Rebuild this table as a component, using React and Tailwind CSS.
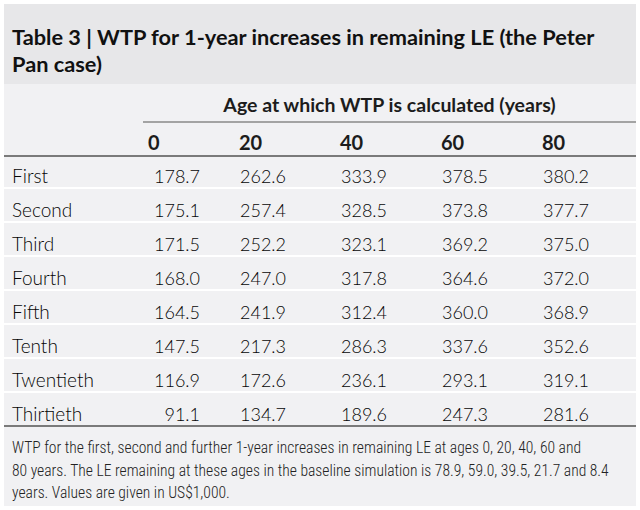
const cols = ["0", "20", "40", "60", "80"];

const rows = [
  ["First", "178.7", "262.6", "333.9", "378.5", "380.2"],
  ["Second", "175.1", "257.4", "328.5", "373.8", "377.7"],
  ["Third", "171.5", "252.2", "323.1", "369.2", "375.0"],
  ["Fourth", "168.0", "247.0", "317.8", "364.6", "372.0"],
  ["Fifth", "164.5", "241.9", "312.4", "360.0", "368.9"],
  ["Tenth", "147.5", "217.3", "286.3", "337.6", "352.6"],
  ["Twentieth", "116.9", "172.6", "236.1", "293.1", "319.1"],
  ["Thirtieth", "91.1", "134.7", "189.6", "247.3", "281.6"],
];

const grid = "grid grid-cols-[144px_91px_101px_101px_101px_1fr]";

export default function App() {
  return (
    <div className="w-[640px] h-[510px] bg-white p-1 text-[#1c1c1c] font-['Lato',sans-serif]">
      <div className="h-full flex flex-col bg-[#f1f1f3]">
        {/* title */}
        <div className="bg-[#e7e7e9] h-[80px] pt-[20px] px-2 text-[21.75px] leading-[27px] font-bold text-[#111] whitespace-nowrap">
          <div>Table 3 | WTP for 1-year increases in remaining LE (the Peter</div>
          <div>Pan case)</div>
        </div>

        {/* column heads */}
        <div className="flex">
          <div className="w-[139px] shrink-0" />
          <div className="flex-1 pt-[9px] pb-[4px] text-center text-[19.5px] leading-[24px] font-bold border-b-2 border-[#a3a3a3] whitespace-nowrap">
            Age at which WTP is calculated (years)
          </div>
        </div>
        <div className={`${grid} h-[34px] pt-[7px] text-[20px] leading-[24px] font-bold border-b-2 border-[#7a7a7a]`}>
          <div />
          {cols.map((c) => (
            <div key={c}>{c}</div>
          ))}
        </div>

        {/* body */}
        <div className="flex flex-col gap-[2px] bg-white">
          {rows.map((r, i) => (
            <div
              key={r[0]}
              className={`${grid} ${i === 0 ? "h-[30px] pt-[8px]" : "h-[32px] pt-[10px]"} bg-[#f1f1f3] text-[18px] leading-[22px] font-light text-[#050505]`}
            >
              <div className="pl-2 text-[19px]">{r[0]}</div>
              {r.slice(1).map((v, j) => (
                <div key={j}>
                  <div className={`${j === 0 ? "w-[52px]" : "w-[47px]"} text-right`}>{v}</div>
                </div>
              ))}
              <div />
            </div>
          ))}
        </div>

        {/* footnote */}
        <div className="flex-1 border-t-2 border-[#7a7a7a] pt-[10px] px-2 text-[15.6px] leading-[22.5px] text-[#222] whitespace-nowrap font-light font-['Roboto_Condensed',sans-serif]">
          <div>WTP for the first, second and further 1-year increases in remaining LE at ages 0, 20, 40, 60 and</div>
          <div>80 years. The LE remaining at these ages in the baseline simulation is 78.9, 59.0, 39.5, 21.7 and 8.4</div>
          <div>years. Values are given in US$1,000.</div>
        </div>
      </div>
    </div>
  );
}
